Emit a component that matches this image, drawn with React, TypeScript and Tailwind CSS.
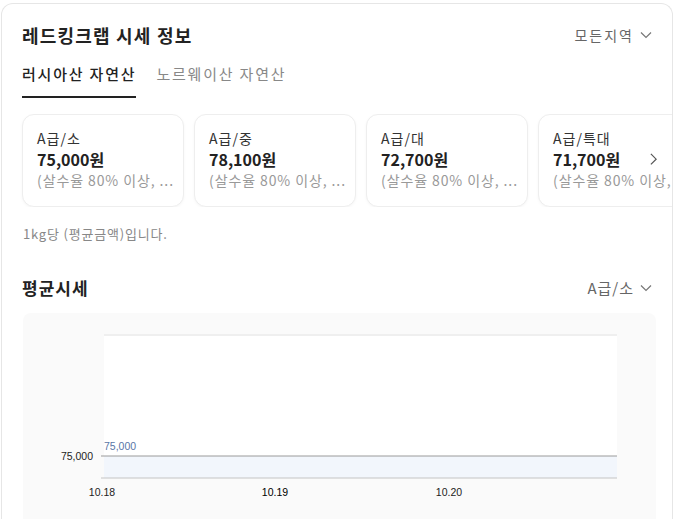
import React from "react";

const font = { fontFamily: '"Noto Sans CJK KR", "Noto Sans", sans-serif' };

const grades = [
  { name: "A급/소", price: "75,000원" },
  { name: "A급/중", price: "78,100원" },
  { name: "A급/대", price: "72,700원" },
  { name: "A급/특대", price: "71,700원" },
];

function Chevron({ className }: { className?: string }) {
  return (
    <svg viewBox="0 0 12 8" className={className} fill="none" stroke="currentColor" strokeWidth="1.2">
      <path d="M1 1.5l5 5 5-5" />
    </svg>
  );
}

function PriceChart() {
  return (
    <svg width="633" height="220" viewBox="0 0 633 220" className="block">
      <rect x="81" y="22" width="513" height="143" fill="#ffffff" />
      <line x1="81" y1="22" x2="594" y2="22" stroke="#efefef" strokeWidth="2" />
      <rect x="81" y="143" width="513" height="22" fill="#f2f6fc" />
      <line x1="78" y1="143" x2="594" y2="143" stroke="#9a9a9a" strokeWidth="1" />
      <line x1="78" y1="165" x2="594" y2="165" stroke="#c4c4c4" strokeWidth="1" />
      <g fontFamily='"Liberation Sans", Arial, sans-serif' fontSize="10.5">
        <text x="70" y="147" textAnchor="end" fill="#222">75,000</text>
        <text x="81" y="137" fill="#5a76a6">75,000</text>
        <text x="79" y="183" textAnchor="middle" fill="#222">10.18</text>
        <text x="252" y="183" textAnchor="middle" fill="#000">10.19</text>
        <text x="426" y="183" textAnchor="middle" fill="#222">10.20</text>
      </g>
    </svg>
  );
}

export default function App() {
  return (
    <div className="h-[519px] overflow-hidden bg-white" style={font}>
      <div className="ml-px mt-[3px] w-[672px] rounded-t-xl border border-b-0 border-[#e6e6e6] pt-[18px]">
        <div className="flex items-center justify-between pl-[20px] pr-[20px]">
          <h2 className="text-[18px] font-bold leading-[26px] tracking-[1.2px] text-[#222]">레드킹크랩 시세 정보</h2>
          <button className="flex items-center gap-[6px] text-[14px] tracking-[2px] text-[#666]">
            모든지역
            <Chevron className="w-[12px] text-[#777]" />
          </button>
        </div>

        <div className="mt-[15px] flex gap-[20px] pl-[20px] text-[15px] leading-[22px] tracking-[1.8px]">
          <span className="border-b-2 border-[#222] pb-[11px] font-medium text-[#222]">러시아산 자연산</span>
          <span className="pb-[11px] text-[#888]">노르웨이산 자연산</span>
        </div>

        <div className="relative mt-[16px] overflow-hidden">
          <div className="flex gap-[10px] pl-[20px]">
            {grades.map((g) => (
              <div
                key={g.name}
                className="w-[162px] shrink-0 rounded-xl border border-[#eeeeee] bg-white pb-[16px] pl-[14px] pt-[13px] shadow-[0_1px_3px_rgba(0,0,0,0.04)]"
              >
                <div className="text-[14px] leading-[20px] tracking-[1px] text-[#333]">{g.name}</div>
                <div className="text-[16px] font-bold leading-[22px] text-[#222]">{g.price}</div>
                <div className="whitespace-nowrap text-[14px] leading-[20px] tracking-[0.9px] text-[#999]">(살수율 80% 이상, ...</div>
              </div>
            ))}
          </div>
          <svg viewBox="0 0 8 14" className="absolute right-[15px] top-[39px] w-[7px] text-[#555]" fill="none" stroke="currentColor" strokeWidth="1.4">
            <path d="M1 1l6 6-6 6" />
          </svg>
        </div>

        <p className="mt-[18px] pl-[21px] text-[13px] leading-[18px] tracking-[0.8px] text-[#888]">1kg당 (평균금액)입니다.</p>

        <div className="mt-[33px] flex items-center justify-between pl-[20px] pr-[20px]">
          <h3 className="text-[17px] font-bold leading-[24px] tracking-[1px] text-[#222]">평균시세</h3>
          <button className="flex items-center gap-[6px] text-[15px] tracking-[1px] text-[#666]">
            A급/소
            <Chevron className="w-[12px] text-[#777]" />
          </button>
        </div>

        <div className="ml-[21px] mt-[13px] h-[220px] w-[633px] rounded-lg bg-[#fafafa]">
          <PriceChart />
        </div>
      </div>
    </div>
  );
}
